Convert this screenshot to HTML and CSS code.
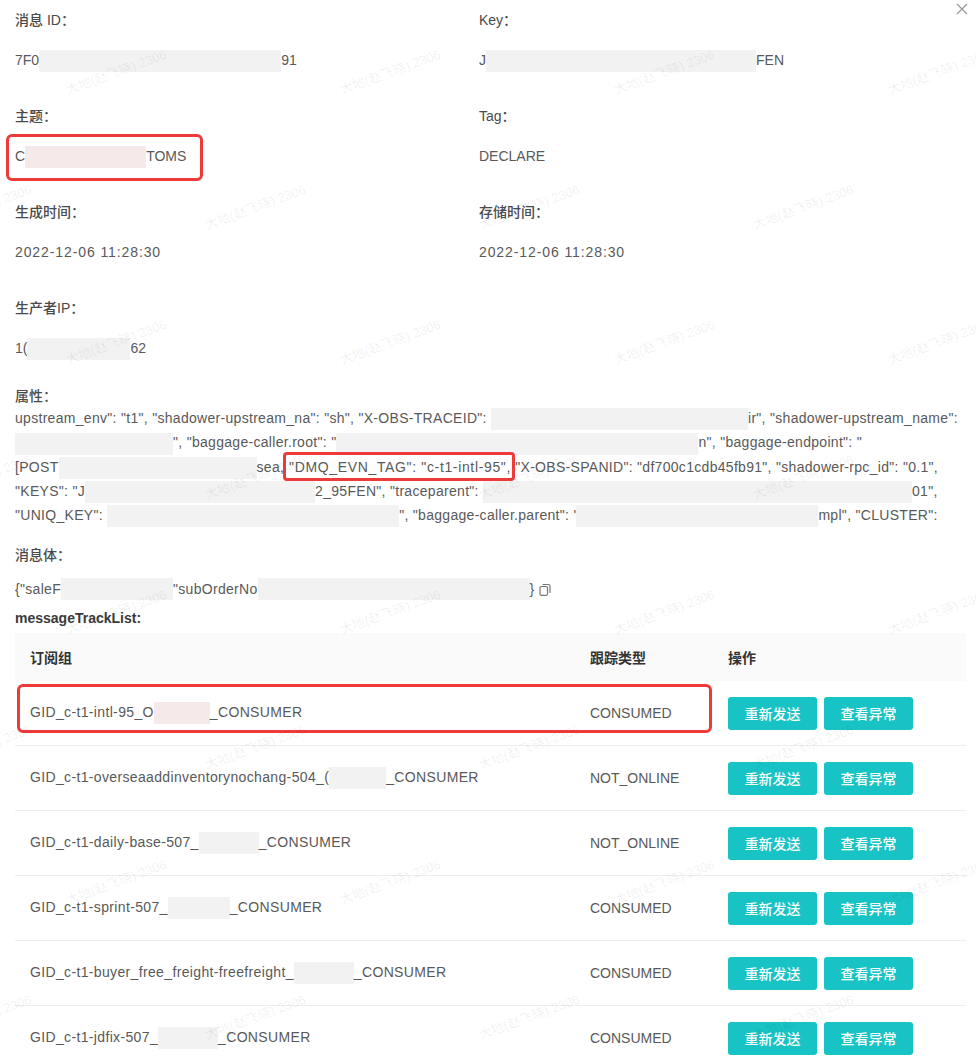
FILE: index.html
```html
<!DOCTYPE html>
<html lang="zh-CN">
<head>
    <meta charset="UTF-8">
    <meta name="viewport" content="width=device-width, initial-scale=1.0">
    <title>消息详情</title>
    <link rel="stylesheet" href="styles.css">
</head>
<body>
    <div class="page">
        <svg class="close" width="12" height="12" viewBox="0 0 12 12">
            <path d="M1 1 L11 11 M11 1 L1 11" stroke="#999" stroke-width="1.3" fill="none"/>
        </svg>

        <div class="details">
            <div class="field">
                <div class="label">消息 ID：</div>
                <div class="value">7F0<span class="redact w-242"></span>91</div>
            </div>
            <div class="field">
                <div class="label">Key：</div>
                <div class="value">J<span class="redact w-270"></span>FEN</div>
            </div>
            <div class="field">
                <div class="label">主题：</div>
                <div class="value">C<span class="redact pink w-121"></span>TOMS</div>
            </div>
            <div class="field">
                <div class="label">Tag：</div>
                <div class="value">DECLARE</div>
            </div>
            <div class="field">
                <div class="label">生成时间：</div>
                <div class="value date">2022-12-06 11:28:30</div>
            </div>
            <div class="field">
                <div class="label">存储时间：</div>
                <div class="value date">2022-12-06 11:28:30</div>
            </div>
            <div class="field">
                <div class="label">生产者IP：</div>
                <div class="value">1(<span class="redact w-103"></span>62</div>
            </div>
        </div>

        <div class="block attrs">
            <div class="label">属性：</div>
            <div class="attr-box">
                <div class="line">upstream_env": "t1", "shadower-upstream_na": "sh", "X-OBS-TRACEID": <span class="redact w-257"></span>ir", "shadower-upstream_name":</div>
                <div class="line"><span class="redact w-158"></span>", "baggage-caller.root": "<span class="redact w-362"></span>n", "baggage-endpoint": "</div>
                <div class="line">[POST<span class="redact w-198"></span>sea<span class="wide">, "DMQ_EVN_TAG": "c-t1-intl-95",</span> "X-OBS-SPANID": "df700c1cdb45fb91", "shadower-rpc_id": "0.1",</div>
                <div class="line">"KEYS": "J<span class="redact w-230"></span>2_95FEN", "traceparent": <span class="redact w-429"></span>01",</div>
                <div class="line">"UNIQ_KEY": <span class="redact w-292"></span>", "baggage-caller.parent": '<span class="redact w-242"></span>mpl", "CLUSTER":</div>
            </div>
        </div>

        <div class="block body-block">
            <div class="label">消息体：</div>
            <div class="value body-line">{"saleF<span class="redact w-112"></span>"subOrderNo<span class="redact w-272"></span>}
                <svg class="copy" width="12" height="13" viewBox="0 0 12 13">
                    <path d="M3.5 1.5 H9.5 A1.5 1.5 0 0 1 11 3 V10" stroke="#777" stroke-width="1.2" fill="none"/>
                    <rect x="1" y="3.5" width="7.5" height="8.8" rx="1.2" stroke="#777" stroke-width="1.2" fill="none"/>
                </svg>
            </div>
        </div>

        <div class="track-title">messageTrackList:</div>

        <table class="track">
            <thead>
                <tr>
                    <th class="col-group">订阅组</th>
                    <th class="col-type">跟踪类型</th>
                    <th class="col-op">操作</th>
                </tr>
            </thead>
            <tbody>
                <tr>
                    <td class="gid">GID_c-t1-intl-95_O<span class="redact pink w-56"></span>_CONSUMER</td>
                    <td>CONSUMED</td>
                    <td><button class="btn">重新发送</button><button class="btn">查看异常</button></td>
                </tr>
                <tr>
                    <td class="gid">GID_c-t1-overseaaddinventorynochang-504_(<span class="redact w-57"></span>_CONSUMER</td>
                    <td>NOT_ONLINE</td>
                    <td><button class="btn">重新发送</button><button class="btn">查看异常</button></td>
                </tr>
                <tr>
                    <td class="gid">GID_c-t1-daily-base-507_<span class="redact w-60"></span>_CONSUMER</td>
                    <td>NOT_ONLINE</td>
                    <td><button class="btn">重新发送</button><button class="btn">查看异常</button></td>
                </tr>
                <tr>
                    <td class="gid">GID_c-t1-sprint-507_<span class="redact w-62"></span>_CONSUMER</td>
                    <td>CONSUMED</td>
                    <td><button class="btn">重新发送</button><button class="btn">查看异常</button></td>
                </tr>
                <tr>
                    <td class="gid">GID_c-t1-buyer_free_freight-freefreight_<span class="redact w-60"></span>_CONSUMER</td>
                    <td>CONSUMED</td>
                    <td><button class="btn">重新发送</button><button class="btn">查看异常</button></td>
                </tr>
                <tr>
                    <td class="gid">GID_c-t1-jdfix-507_<span class="redact w-60"></span>_CONSUMER</td>
                    <td>CONSUMED</td>
                    <td><button class="btn">重新发送</button><button class="btn">查看异常</button></td>
                </tr>
            </tbody>
        </table>

        <!-- annotation boxes drawn over the screenshot -->
        <div class="mark mark-topic"></div>
        <div class="mark mark-tag"></div>
        <div class="mark mark-row"></div>

        <!-- watermark -->
        <div class="wm wm-a">
            <span>大地(赵飞晓) 2306</span><span>大地(赵飞晓) 2306</span><span>大地(赵飞晓) 2306</span><span>大地(赵飞晓) 2306</span>
            <span>大地(赵飞晓) 2306</span><span>大地(赵飞晓) 2306</span><span>大地(赵飞晓) 2306</span><span>大地(赵飞晓) 2306</span>
            <span>大地(赵飞晓) 2306</span><span>大地(赵飞晓) 2306</span><span>大地(赵飞晓) 2306</span><span>大地(赵飞晓) 2306</span>
            <span>大地(赵飞晓) 2306</span><span>大地(赵飞晓) 2306</span><span>大地(赵飞晓) 2306</span><span>大地(赵飞晓) 2306</span>
        </div>
        <div class="wm wm-b">
            <span>大地(赵飞晓) 2306</span><span>大地(赵飞晓) 2306</span><span>大地(赵飞晓) 2306</span><span>大地(赵飞晓) 2306</span>
            <span>大地(赵飞晓) 2306</span><span>大地(赵飞晓) 2306</span><span>大地(赵飞晓) 2306</span><span>大地(赵飞晓) 2306</span>
            <span>大地(赵飞晓) 2306</span><span>大地(赵飞晓) 2306</span><span>大地(赵飞晓) 2306</span><span>大地(赵飞晓) 2306</span>
            <span>大地(赵飞晓) 2306</span><span>大地(赵飞晓) 2306</span><span>大地(赵飞晓) 2306</span><span>大地(赵飞晓) 2306</span>
        </div>
    </div>
</body>
</html>
```

FILE: styles.css
```css
body {
    margin: 0;
    background: #fff;
    font-family: "Liberation Sans", "Noto Sans CJK SC", sans-serif;
    font-size: 14px;
    color: #595959;
}
.page {
    position: relative;
    width: 976px;
    height: 1059px;
    overflow: hidden;
    padding: 9px 10px 0 15px;
    box-sizing: border-box;
}
.close {
    position: absolute;
    top: 3px;
    right: 8px;
}

/* detail fields */
.details {
    display: grid;
    grid-template-columns: 464px 1fr;
}
.field {
    height: 96px;
}
.label {
    line-height: 22px;
    color: #4a4a4a;
    font-weight: 500;
}
.value {
    line-height: 22px;
    margin-top: 18px;
    color: #595959;
    white-space: nowrap;
}
.date {
    letter-spacing: 0.9px;
}
.redact {
    display: inline-block;
    height: 22px;
    vertical-align: middle;
    background: #f2f2f2;
}
.redact.pink {
    background: #f6e9e9;
}
.w-56 { width: 56px; }
.w-57 { width: 57px; }
.w-60 { width: 60px; }
.w-62 { width: 62px; }
.w-103 { width: 103px; }
.w-112 { width: 112px; }
.w-121 { width: 121px; }
.w-158 { width: 158px; }
.w-198 { width: 198px; }
.w-230 { width: 230px; }
.w-242 { width: 242px; }
.w-257 { width: 257px; }
.w-270 { width: 270px; }
.w-272 { width: 272px; }
.w-292 { width: 292px; }
.w-362 { width: 362px; }
.w-429 { width: 429px; }

/* attributes */
.attrs {
    margin-top: -8px;
}
.attrs .label {
    height: 21px;
}
.attr-box {
    color: #595959;
}
.line {
    line-height: 24px;
    white-space: nowrap;
    letter-spacing: 0.3px;
}
.line .wide {
    letter-spacing: 0.65px;
}
.body-block {
    margin-top: 17px;
}
.body-line {
    margin-top: 12px;
    display: flex;
    align-items: center;
    letter-spacing: 0.3px;
}
.copy {
    margin-left: 4px;
}
.track-title {
    margin-top: 7px;
    line-height: 22px;
    font-weight: bold;
    color: #3a3a3a;
}

/* table */
.track {
    margin-top: 4px;
    width: 951px;
    border-collapse: collapse;
}
.track th {
    height: 48px;
    padding: 0 0 0 15px;
    background: #fafafa;
    text-align: left;
    font-weight: bold;
    color: #333;
}
.col-group { width: 545px; }
.col-type { width: 123px; }
.track td {
    height: 64px;
    padding: 0 0 0 15px;
    border-bottom: 1px solid #eeeeee;
    white-space: nowrap;
}
.track td.gid {
    letter-spacing: 0.35px;
}
.btn {
    width: 89px;
    height: 33px;
    margin-right: 7px;
    border: none;
    border-radius: 3px;
    background: #17c3c4;
    color: #fff;
    font-family: "Noto Sans CJK SC", sans-serif;
    font-size: 14px;
    font-weight: 500;
    vertical-align: middle;
}

/* red annotation boxes */
.mark {
    position: absolute;
    border: 3px solid #ef3a3a;
    border-radius: 6px;
    pointer-events: none;
}
.mark-topic {
    left: 6px;
    top: 134px;
    width: 191px;
    height: 41px;
}
.mark-tag {
    left: 283px;
    top: 452px;
    width: 226px;
    height: 23px;
    border-radius: 4px;
}
.mark-row {
    left: 17px;
    top: 684px;
    width: 689px;
    height: 43px;
}

/* watermark */
.wm {
    position: absolute;
    display: grid;
    grid-template-columns: repeat(4, 274px);
    grid-auto-rows: 270px;
    pointer-events: none;
}
.wm-a {
    left: 105px;
    top: 50px;
}
.wm-b {
    left: -30px;
    top: 185px;
}
.wm span {
    display: inline-block;
    width: 130px;
    font-size: 13px;
    color: rgba(0, 0, 0, 0.07);
    transform: rotate(-20deg);
    white-space: nowrap;
}
```
